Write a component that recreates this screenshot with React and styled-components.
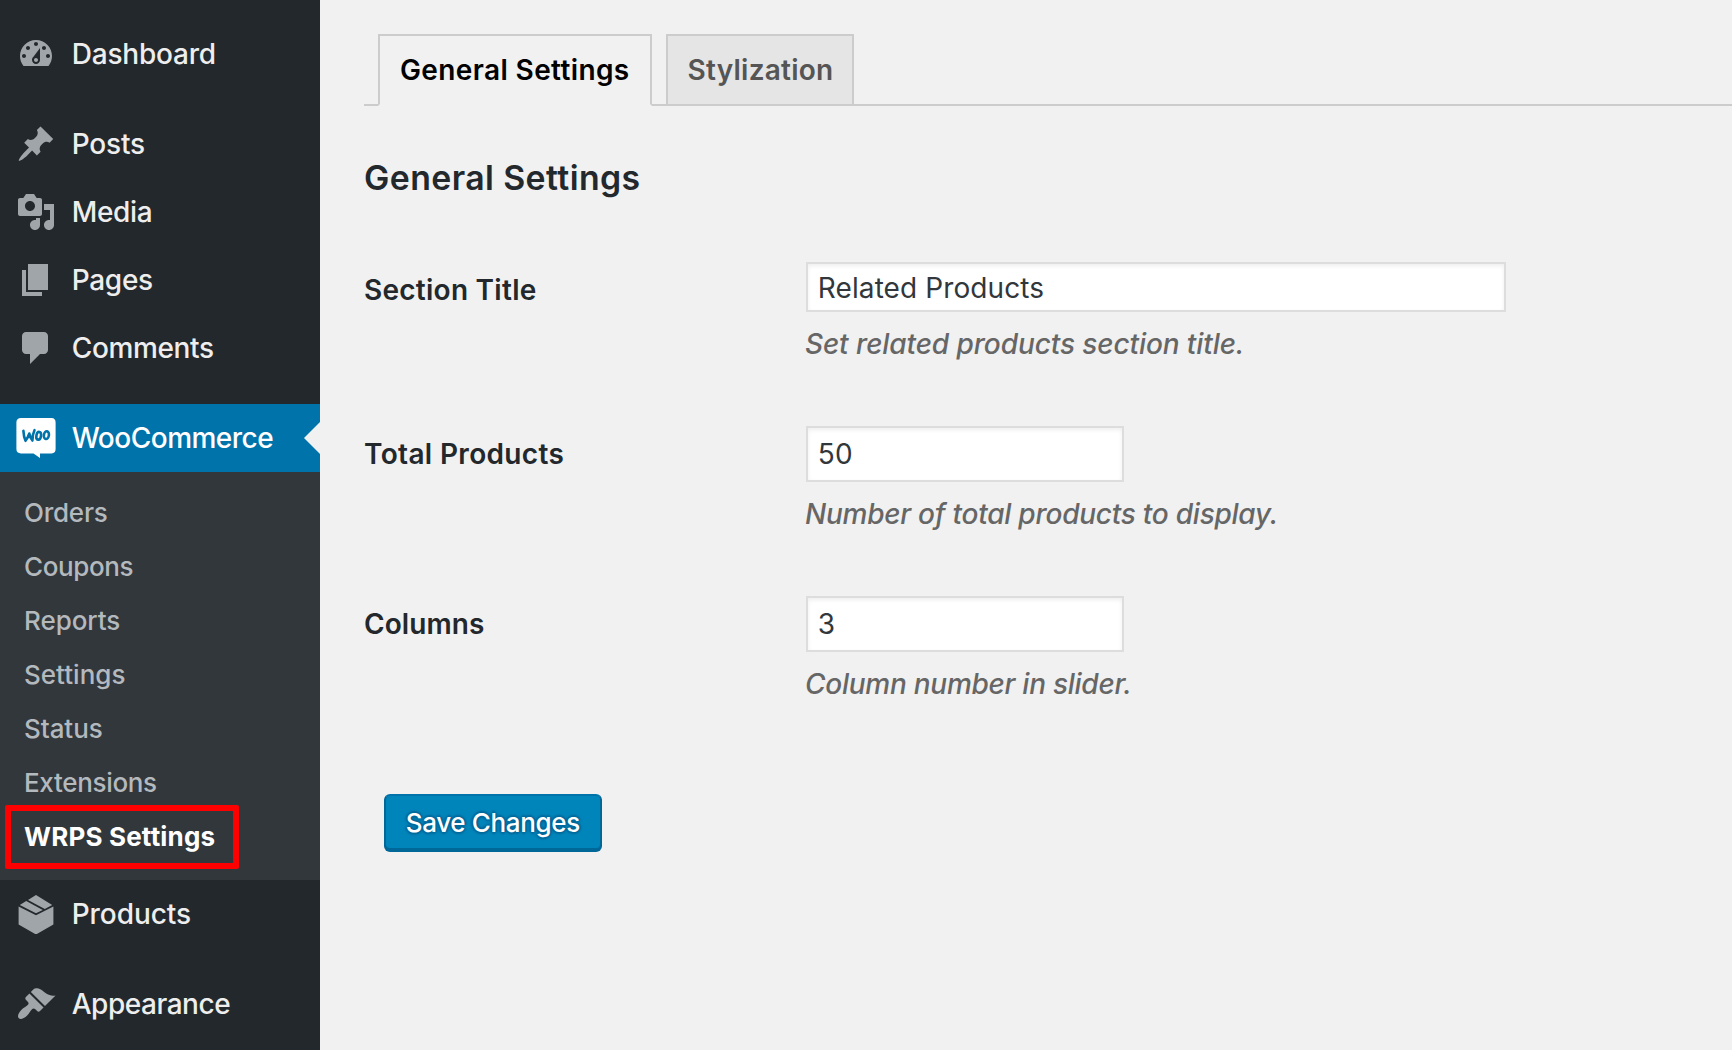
import React from 'react';
import styled, { createGlobalStyle, css } from 'styled-components';

const colors = {
  sidebar: '#23282d',
  submenu: '#32373c',
  active: '#0073aa',
  page: '#f1f1f1',
  icon: '#a0a5aa',
};

const GlobalStyle = createGlobalStyle`
  * { box-sizing: border-box; }
  body {
    margin: 0;
    background: ${colors.page};
    font-family: Inter, "Liberation Sans", sans-serif;
    overflow: hidden;
  }
`;

const Page = styled.div`
  display: flex;
  height: 1050px;
  overflow: hidden;
`;

const Sidebar = styled.nav`
  flex: none;
  width: 320px;
  padding-top: 20px;
  background: ${colors.sidebar};
`;

const Separator = styled.div`
  height: 22px;
`;

const MenuItem = styled.a`
  position: relative;
  display: flex;
  align-items: center;
  gap: 15.7px;
  height: 68px;
  padding-left: 16px;
  color: #eee;
  font-size: 28px;
  font-weight: 500;
  line-height: 68px;
  ${(p) => p.$current && css`
    background: ${colors.active};
    color: #fff;
    &::after {
      content: '';
      position: absolute;
      right: 0;
      top: 18px;
      border: 16px solid transparent;
      border-left-width: 0;
      border-right-color: ${colors.page};
    }
  `}
`;

const Label = styled.span`
  letter-spacing: ${(p) => p.$track || 0}px;
  white-space: nowrap;
`;

const Icon = styled.svg`
  flex: none;
  width: 40px;
  height: 40px;
  fill: ${colors.icon};
`;

const Submenu = styled.div`
  padding: 14px 0 16px;
  background: ${colors.submenu};
`;

const SubItem = styled.a`
  position: relative;
  display: block;
  height: 54px;
  padding-left: 24px;
  color: ${(p) => (p.$current ? '#fff' : '#b4b9be')};
  font-size: 26px;
  font-weight: ${(p) => (p.$current ? 700 : 500)};
  line-height: 53px;
`;

const Highlight = styled.span`
  position: absolute;
  left: 5px;
  top: -5px;
  width: 234px;
  height: 64px;
  border: 6px solid #f00;
  border-radius: 2px;
`;

const Main = styled.main`
  flex: 1;
  min-width: 0;
  padding: 34px 0 0 44px;
`;

const Tabs = styled.div`
  display: flex;
  gap: 14px;
  height: 72px;
  padding-left: 14px;
  border-bottom: 2px solid #ccc;
`;

const Tab = styled.a`
  width: ${(p) => p.$width}px;
  height: 70px;
  padding-left: ${(p) => (p.$current ? 20 : 19.5)}px;
  border: 2px solid #ccc;
  border-bottom: 0;
  background: #e5e5e5;
  color: #555;
  font-size: 28px;
  font-weight: 600;
  line-height: 68px;
  ${(p) => p.$current && css`
    height: 72px;
    border-bottom: 2px solid ${colors.page};
    background: ${colors.page};
    color: #000;
  `}
`;

const Heading = styled.h2`
  margin: 50px 0 63px;
  color: #23282d;
  font-size: 33.8px;
  font-weight: 600;
  line-height: 43px;
`;

const Form = styled.form`
  display: flex;
  flex-direction: column;
  align-items: flex-start;
  gap: 61px;
`;

const Row = styled.div`
  display: grid;
  grid-template-columns: 442px auto;
`;

const FieldName = styled.label`
  color: #23282d;
  font-size: 28px;
  font-weight: 600;
  line-height: 56px;
`;

const Input = styled.input`
  display: block;
  width: ${(p) => (p.$wide ? 700 : 318)}px;
  height: ${(p) => (p.$wide ? 50 : 56)}px;
  padding: ${(p) => (p.$wide ? 2 : 0)}px 10px 0 9.8px;
  border: 2px solid #ddd;
  border-radius: 0;
  outline: 0;
  background: #fff;
  box-shadow: inset 0 2px 4px rgba(0, 0, 0, 0.07);
  color: #32373c;
  font: 400 28px Inter, "Liberation Sans", sans-serif;
  letter-spacing: 0.1px;
`;

const Description = styled.p`
  margin: 11px 0 0 -1px;
  color: #666;
  font-size: 28px;
  font-style: italic;
  font-weight: 500;
  line-height: 42px;
`;

const SaveButton = styled.button`
  width: 218px;
  height: 56px;
  margin: 28px 0 0 20px;
  padding: 0 0 0 19.8px;
  border: 2px solid;
  border-color: #0073aa #006799 #006799;
  border-radius: 6px;
  background: #0085ba;
  box-shadow: 0 2px 0 #006799;
  color: #fff;
  font: 500 26px/53px Inter, "Liberation Sans", sans-serif;
  letter-spacing: -0.35px;
  text-align: left;
  text-shadow: 0 -2px 2px #006799, 2px 0 2px #006799, 0 2px 2px #006799, -2px 0 2px #006799;
`;

const icons = {
  dashboard: (
    <path d="M3.76 16h12.48c1.1-1.37 1.76-3.11 1.76-5 0-4.42-3.58-8-8-8s-8 3.58-8 8c0 1.89.66 3.63 1.76 5zM10 4c.55 0 1 .45 1 1s-.45 1-1 1-1-.45-1-1 .45-1 1-1zM6 6c.55 0 1 .45 1 1s-.45 1-1 1-1-.45-1-1 .45-1 1-1zm8 0c.55 0 1 .45 1 1s-.45 1-1 1-1-.45-1-1 .45-1 1-1zm-5.37 5.55L12 7v6c0 1.1-.9 2-2 2s-2-.9-2-2c0-.57.24-1.08.63-1.45zM4 10c.55 0 1 .45 1 1s-.45 1-1 1-1-.45-1-1 .45-1 1-1zm12 0c.55 0 1 .45 1 1s-.45 1-1 1-1-.45-1-1 .45-1 1-1zm-5 3c0-.55-.45-1-1-1s-1 .45-1 1 .45 1 1 1 1-.45 1-1z" />
  ),
  posts: (
    <path d="M10.44 3.02l1.82-1.82 6.36 6.35-1.83 1.82c-1.05-.68-2.48-.57-3.41.36l-.75.75c-.92.93-1.04 2.35-.35 3.41l-1.83 1.82-2.41-2.41-2.8 2.79c-.42.42-3.38 2.71-3.8 2.29s1.86-3.39 2.28-3.81l2.79-2.79L4.1 9.36l1.83-1.82c1.05.69 2.48.57 3.4-.36l.75-.75c.93-.92 1.05-2.35.36-3.41z" />
  ),
  media: (
    <path d="M13 11V4c0-.55-.45-1-1-1h-1.67L9 1H5L3.67 3H2c-.55 0-1 .45-1 1v7c0 .55.45 1 1 1h10c.55 0 1-.45 1-1zM7 4.5c1.38 0 2.5 1.12 2.5 2.5S8.38 9.5 7 9.5 4.5 8.38 4.5 7 5.62 4.5 7 4.5zM14 6h5v10.5c0 1.38-1.12 2.5-2.5 2.5S14 17.88 14 16.5s1.12-2.5 2.5-2.5c.17 0 .34.02.5.05V9h-3V6zm-4 8.05V13h2v3.5c0 1.38-1.12 2.5-2.5 2.5S7 17.88 7 16.5 8.12 14 9.5 14c.17 0 .34.02.5.05z" />
  ),
  pages: <path d="M6 15V2h10v13H6zm-1 1h8v2H3V5h2v11z" />,
  comments: (
    <path d="M5 2h9c1.1 0 2 .9 2 2v7c0 1.1-.9 2-2 2h-2l-5 5v-5H5c-1.1 0-2-.9-2-2V4c0-1.1.9-2 2-2z" />
  ),
  woo: (
    <g transform="scale(.5)">
      <path fill="#fff" d="M5 0H35.500Q39.600 0 39.600 4.500V31Q39.600 35.400 35.500 35.400H24V40L17.500 35.400H5Q.4 35.400 .4 31V4.500Q.4 0 5 0Z" />
      <g fill="none" stroke="#0073aa" strokeWidth="2.600" strokeLinecap="round" strokeLinejoin="round">
        <path d="M7.400 12.800Q7.800 19 9.500 22.800Q12 19.500 13.300 15.500Q14.200 20 16.400 22.500Q16.400 16.500 18.500 12.200" />
        <ellipse cx="22.700" cy="17.800" rx="2.300" ry="3.900" transform="rotate(10 22.700 17.800)" />
        <ellipse cx="30.400" cy="17.200" rx="2.500" ry="3.900" transform="rotate(10 30.400 17.200)" />
      </g>
    </g>
  ),
  products: (
    <g transform="scale(.5)">
      <path d="M2.600 12.400L20 21.200 37.400 12.400V30.500L20 40.500 2.600 30.500Z" />
      <path d="M3.800 11.100L10.200 7.100 26.800 15.900 20 19.300Z" />
      <path d="M12 6L20 1 36.200 11.100 28.800 14.900Z" />
    </g>
  ),
  appearance: (
    <path d="M14.480 11.060L7.410 3.990l1.500-1.500c.5-.56 2.300-.47 3.510.32 1.210.8 1.430 1.280 2.910 2.100 1.180.64 2.450 1.260 4.450.85zm-.71.71L6.700 4.700 4.930 6.470c-.39.39-.39 1.020 0 1.410l1.060 1.060c.39.39.39 1.030 0 1.420-.6.600-1.430 1.110-2.210 1.690-.35.260-.7.530-1.010.840C1.430 14.230.4 16.080 1.400 17.070c.990 1 2.840-.03 4.180-1.360.31-.31.58-.66.85-1.020.57-.78 1.080-1.610 1.690-2.210.39-.39 1.020-.39 1.410 0l1.060 1.060c.39.39 1.020.39 1.410 0z" />
  ),
};

function NavItem({ icon, text, track, current }) {
  return (
    <MenuItem $current={current}>
      <Icon viewBox="0 0 20 20">{icons[icon]}</Icon>
      <Label $track={track}>{text}</Label>
    </MenuItem>
  );
}

const subItems = [
  { text: 'Orders', track: -0.23 },
  { text: 'Coupons', track: -0.4 },
  { text: 'Reports', track: -0.05 },
  { text: 'Settings', track: 0.015 },
  { text: 'Status', track: -0.056 },
  { text: 'Extensions', track: -0.327 },
  { text: 'WRPS Settings', track: 0.18, current: true },
];

const fields = [
  { name: 'Section Title', nameTrack: 0.26, value: 'Related Products', wide: true, help: 'Set related products section title.', helpTrack: -0.1 },
  { name: 'Total Products', nameTrack: 0.344, value: '50', help: 'Number of total products to display.', helpTrack: -0.25 },
  { name: 'Columns', nameTrack: 0.09, value: '3', help: 'Column number in slider.', helpTrack: -0.26 },
];

export default function App() {
  return (
    <>
      <GlobalStyle />
      <Page>
        <Sidebar>
          <NavItem icon="dashboard" text="Dashboard" track={-0.2} />
          <Separator />
          <NavItem icon="posts" text="Posts" track={-0.18} />
          <NavItem icon="media" text="Media" track={-0.3} />
          <NavItem icon="pages" text="Pages" track={-0.3} />
          <NavItem icon="comments" text="Comments" track={-0.34} />
          <Separator />
          <NavItem icon="woo" text="WooCommerce" track={-0.5} current />
          <Submenu>
            {subItems.map((item) => (
              <SubItem key={item.text} $current={item.current}>
                <Label $track={item.track}>{item.text}</Label>
                {item.current && <Highlight />}
              </SubItem>
            ))}
          </Submenu>
          <NavItem icon="products" text="Products" track={-0.06} />
          <Separator />
          <NavItem icon="appearance" text="Appearance" track={-0.47} />
        </Sidebar>
        <Main>
          <Tabs>
            <Tab $width={274} $current>
              <Label $track={0.38}>General Settings</Label>
            </Tab>
            <Tab $width={188}>
              <Label $track={0.25}>Stylization</Label>
            </Tab>
          </Tabs>
          <Heading>
            <Label $track={0.42}>General Settings</Label>
          </Heading>
          <Form>
            {fields.map((f) => (
              <Row key={f.name}>
                <FieldName>
                  <Label $track={f.nameTrack}>{f.name}</Label>
                </FieldName>
                <div>
                  <Input type="text" defaultValue={f.value} $wide={f.wide} />
                  <Description>
                    <Label $track={f.helpTrack}>{f.help}</Label>
                  </Description>
                </div>
              </Row>
            ))}
            <SaveButton type="button">Save Changes</SaveButton>
          </Form>
        </Main>
      </Page>
    </>
  );
}
